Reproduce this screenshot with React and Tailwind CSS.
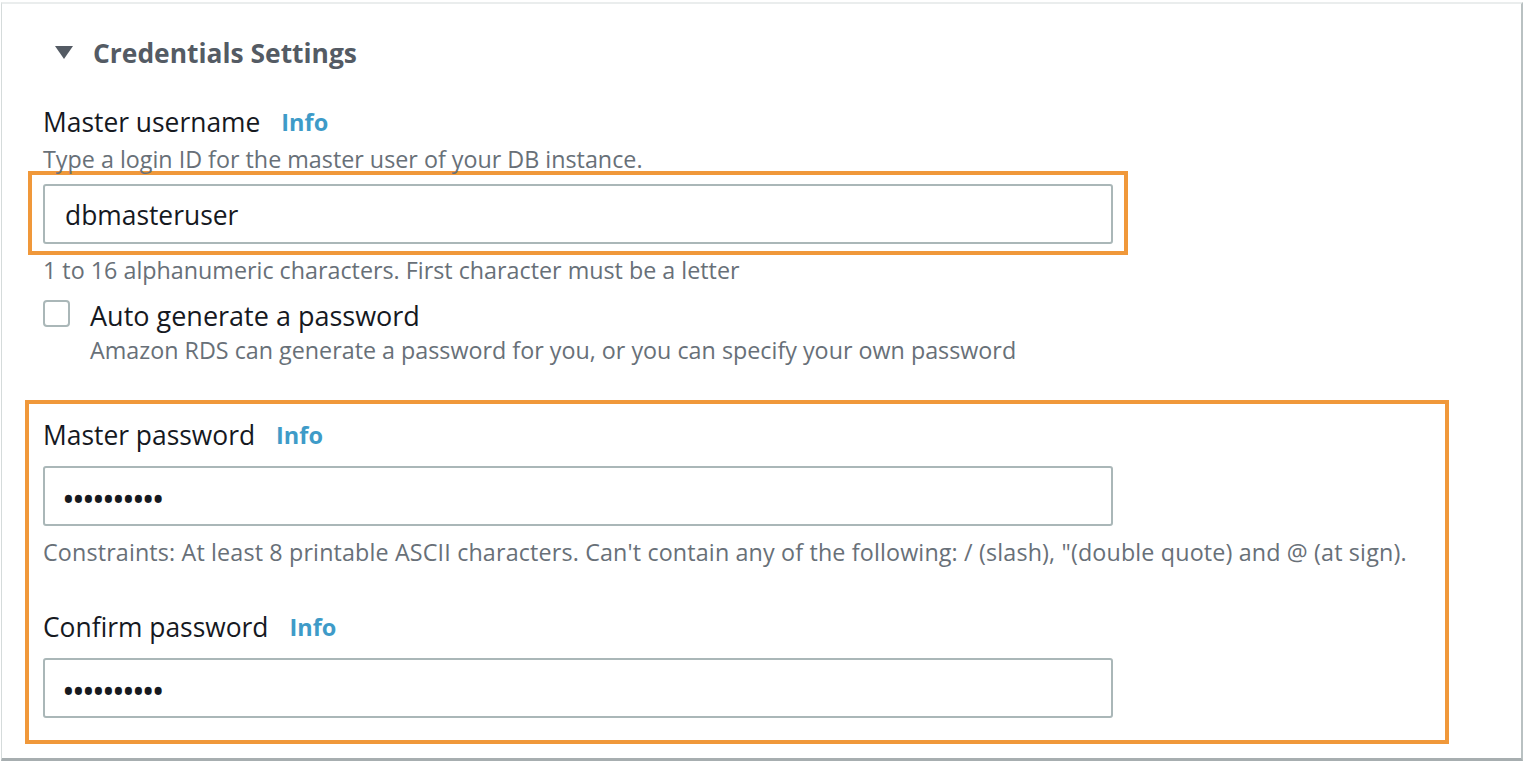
export default function App() {
  const label = "text-[26.4px] leading-[32px] text-[#16191f]";
  const info = "text-[23.5px] leading-[32px] font-bold text-[#3e9bc8]";
  const small = "text-[23.3px] leading-[24px] text-[#687078]";
  const input =
    "w-[1070px] h-[60px] border-2 border-[#aab7b8] rounded-[3px] pl-[20px] flex items-center text-[26.4px] text-[#16191f] bg-white";
  const dots = "text-[34px] leading-none tracking-[-2.8px] mt-[6px] ml-[-3px]";
  return (
    <div className="w-[1524px] h-[762px] bg-white pt-[2px] pl-[1px] font-['Open_Sans',sans-serif]">
      <div className="w-[1522px] h-[759px] bg-white border-l border-t-2 border-r-2 border-b-[3px] border-l-[#d5dbdb] border-t-[#eaeded] border-r-[#b9c1c2] border-b-[#a7aeb0]">
        <div className="pt-[33px] pl-[53px] flex items-center gap-[20px] h-[65px]">
          <svg width="18" height="14" viewBox="0 0 18 14">
            <path d="M0 0 L18 0 L9 13 Z" fill="#545b64" />
          </svg>
          <span className="text-[26.4px] leading-[32px] font-bold text-[#545b64]">
            Credentials Settings
          </span>
        </div>
        <div className="pl-[23px]">
          <div className="pl-[18px] mt-[37px] flex items-center gap-[21px]">
            <span className={label}>Master username</span>
            <span className={info}>Info</span>
          </div>
          <div className={"pl-[18px] mt-[9px] " + small}>
            Type a login ID for the master user of your DB instance.
          </div>
          <div className="ml-[3px] w-[1100px] border-4 border-[#f0983a] pt-[9px] pb-[7px] pl-[11px]">
            <div className={input}>
              <span className="mt-[3px]">dbmasteruser</span>
            </div>
          </div>
          <div className={"pl-[18px] mt-[3px] " + small}>
            1 to 16 alphanumeric characters. First character must be a letter
          </div>
          <div className="pl-[18px] mt-[18px] flex items-start gap-[20px]">
            <div className="w-[27px] h-[27px] border-2 border-[#aab7b8] rounded-[4px] bg-white" />
            <span className="text-[27px] leading-[32px] text-[#16191f]">Auto generate a password</span>
          </div>
          <div className={"pl-[65px] mt-[6px] " + small}>
            Amazon RDS can generate a password for you, or you can specify your own password
          </div>
          <div className="mt-[38px] w-[1424px] border-4 border-[#f0983a] pl-[14px] pt-[15px] pb-[22px]">
            <div className="flex items-center gap-[21px]">
              <span className={label}>Master password</span>
              <span className={info}>Info</span>
            </div>
            <div className={"mt-[15px] " + input}>
              <span className={dots}>••••••••••</span>
            </div>
            <div className={"mt-[14px] tracking-[0.15px] " + small}>
              Constraints: At least 8 printable ASCII characters. Can't contain any of the following: / (slash), "(double quote) and @ (at sign).
            </div>
            <div className="mt-[47px] flex items-center gap-[21px]">
              <span className={label}>Confirm password</span>
              <span className={info}>Info</span>
            </div>
            <div className={"mt-[15px] " + input}>
              <span className={dots}>••••••••••</span>
            </div>
          </div>
        </div>
      </div>
    </div>
  );
}
